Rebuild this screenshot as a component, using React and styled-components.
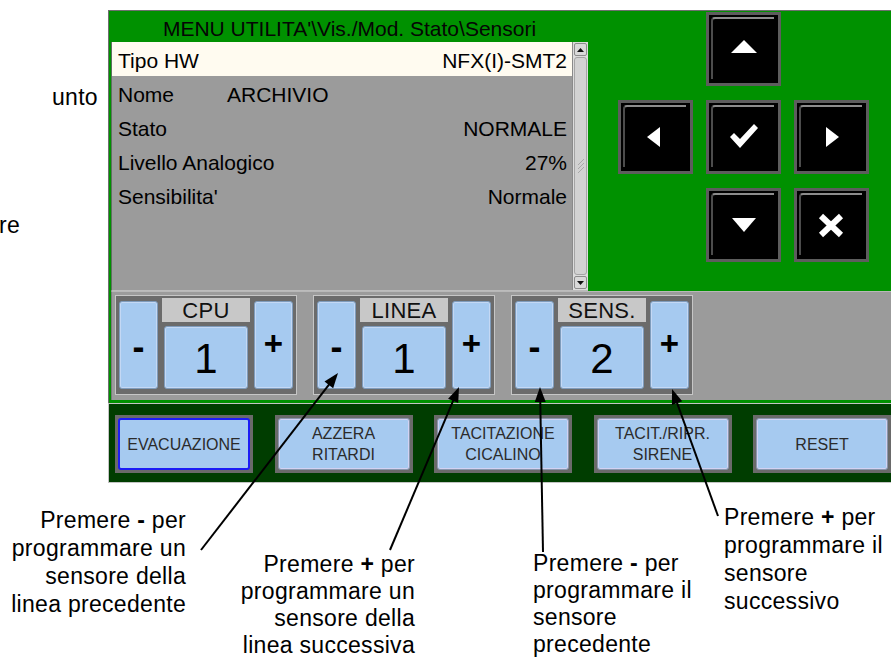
import React from 'react';
import styled, { createGlobalStyle, css } from 'styled-components';

const Global = createGlobalStyle`
  html, body { margin: 0; padding: 0; background: #ffffff; }
  body { font-family: "Liberation Sans", Arial, sans-serif; }
  * { box-sizing: border-box; }
`;

const Page = styled.div`
  position: relative;
  width: 891px;
  height: 659px;
  overflow: hidden;
  background: #ffffff;
  color: #000;
`;

const TopRow = styled.div`
  display: flex;
  height: 483px;
`;

const SideNotes = styled.div`
  width: 108px;
  flex: none;
  padding-top: 83px;
  font-size: 23px;
  line-height: 28px;
  letter-spacing: 0.3px;
  white-space: nowrap;
  overflow: hidden;
`;

const SideLine = styled.div`
  margin-left: ${p => p.$indent}px;
  margin-top: ${p => p.$gap || 0}px;
`;

const Screen = styled.div`
  width: 792px;
  flex: none;
  margin-top: 10px;
  display: flex;
  flex-direction: column;
`;

const UpperPanel = styled.div`
  background: #009100;
  border-top: 1px solid #6e6e6e;
  border-left: 1px solid #6e6e6e;
  padding-bottom: 3px;
  display: flex;
  flex-direction: column;
`;

const MainRow = styled.div`
  display: flex;
  height: 280px;
`;

const LeftCol = styled.div`
  width: 479px;
  flex: none;
  padding-left: 2px;
  display: flex;
  flex-direction: column;
`;

const Header = styled.div`
  height: 31px;
  padding-top: 4px;
  display: flex;
  align-items: center;
  justify-content: center;
  font-size: 21px;
  color: #050505;
  white-space: nowrap;
`;

const ListBox = styled.div`
  height: 249px;
  display: flex;
  border-left: 1px solid #5f6f5f;
  border-bottom: 1px solid #bcbcbc;
`;

const List = styled.div`
  flex: 1;
  background: #9b9b9b;
`;

const Row = styled.div`
  height: 34px;
  padding: 3px 5px 0 6px;
  display: flex;
  align-items: center;
  justify-content: space-between;
  font-size: 21px;
  white-space: nowrap;
  background: ${p => (p.$highlight ? '#fffbf0' : 'transparent')};
`;

const RowLabel = styled.span`
  width: ${p => (p.$fixed ? `${p.$fixed}px` : 'auto')};
  flex: none;
`;

const RowValue = styled.span`
  flex: ${p => (p.$left ? '1' : 'none')};
`;

const Scrollbar = styled.div`
  width: 16px;
  flex: none;
  background: #dcdcdc;
  border-left: 1px solid #8a8a8a;
  display: flex;
  flex-direction: column;
  padding: 1px;
`;

const ScrollBtn = styled.div`
  height: 13px;
  flex: none;
  border: 1px solid #8c8c8c;
  border-radius: 2px;
  background: #d9d9d9;
  display: flex;
  align-items: center;
  justify-content: center;
`;

const Thumb = styled.div`
  flex: 1;
  margin: 1px 0;
  border: 1px solid #a4a4a4;
  border-radius: 3px;
  background: #d2d2d2;
  display: flex;
  align-items: center;
  justify-content: center;
`;

const RightCol = styled.div`
  flex: 1;
  padding: 1px 0 0 30px;
`;

const NavGrid = styled.div`
  display: grid;
  grid-template-columns: repeat(3, 75px);
  grid-template-rows: repeat(3, 74px);
  column-gap: 13px;
  row-gap: 14px;
`;

const NavButton = styled.button`
  grid-column: ${p => p.$col};
  grid-row: ${p => p.$row};
  position: relative;
  border: 3px solid #5d5d5d;
  background: #000;
  padding: 0;
  display: flex;
  align-items: center;
  justify-content: center;
  &::before {
    content: '';
    position: absolute;
    top: 2px;
    left: 2px;
    right: 4px;
    bottom: 4px;
    border-top: 2px solid #8c8c8c;
    border-left: 2px solid #4c4c4c;
    border-radius: 4px 0 0 0;
  }
`;

const CounterBar = styled.div`
  height: 109px;
  margin-left: 2px;
  background: #9b9b9b;
  border-top: 1px solid #b8b8b8;
  border-left: 1px solid #7a7a7a;
  padding: 3px 0 0 3px;
  display: flex;
  gap: 16px;
  align-items: flex-start;
`;

const Group = styled.div`
  width: 182px;
  flex: none;
  display: flex;
  gap: 4px;
  border: 1px solid #c6c6c6;
  background: #6b6b6b;
  padding: 2px 3px 5px;
`;

const blueFace = css`
  background: #a6caf0;
  border: 1px solid #7f9cbc;
  box-shadow: inset 0 0 0 1px #c4d8f4;
  border-radius: 3px;
  display: flex;
  align-items: center;
  justify-content: center;
  color: #000;
`;

const StepButton = styled.div`
  ${blueFace};
  width: 39px;
  height: 88px;
  flex: none;
  margin-top: 3px;
  font-size: ${p => (p.$plus ? '33px' : '36px')};
  font-weight: 700;
  padding-bottom: ${p => (p.$plus ? '2px' : '0')};
  padding-top: ${p => (p.$plus ? '0' : '4px')};
`;

const Middle = styled.div`
  width: 88px;
  flex: none;
  display: flex;
  flex-direction: column;
`;

const GroupLabel = styled.div`
  height: 24px;
  background: #c8c8c8;
  font-size: 22px;
  line-height: 26px;
  text-align: center;
  color: #111;
  letter-spacing: 0.3px;
`;

const ValueBox = styled.div`
  ${blueFace};
  height: 63px;
  margin: 4px 2px 0;
  font-size: 42px;
  padding-top: 2px;
`;

const BottomPanel = styled.div`
  height: 80px;
  background: #003d00;
  border: 1px solid #c4c4c4;
  border-right: none;
  padding: 11px 0 0 6px;
  display: flex;
  gap: 21.5px;
`;

const ActionButton = styled.div`
  width: 138px;
  height: 58px;
  flex: none;
  background: #6a6a6a;
  padding: 3px;
`;

const ActionFace = styled.div`
  height: 100%;
  background: #a6caf0;
  border-radius: 3px;
  display: flex;
  flex-direction: column;
  align-items: center;
  justify-content: center;
  font-size: 16px;
  line-height: 21px;
  color: #2b2b2b;
  text-align: center;
  ${p =>
    p.$active
      ? css`border: 2px solid #1c1cf5;`
      : css`
          border: 1px solid #8896ac;
          box-shadow: inset 0 0 0 1px #d2d2f2;
        `}
`;

const NotesRow = styled.div`
  display: flex;
  height: 176px;
`;

const NoteBlock = styled.div`
  width: ${p => (p.$width ? `${p.$width}px` : 'auto')};
  flex: ${p => (p.$width ? 'none' : '1')};
  margin-top: ${p => p.$mt}px;
  padding-left: ${p => p.$pl || 0}px;
  text-align: ${p => p.$align};
  font-size: 23px;
  line-height: ${p => p.$pitch}px;
  letter-spacing: 0.3px;
  white-space: nowrap;
`;

const NoteLine = styled.div``;

const Overlay = styled.svg`
  position: absolute;
  left: 0;
  top: 0;
  pointer-events: none;
`;

const rows = [
  { label: 'Tipo HW', value: 'NFX(I)-SMT2', highlight: true },
  { label: 'Nome', value: 'ARCHIVIO', left: true },
  { label: 'Stato', value: 'NORMALE' },
  { label: 'Livello Analogico', value: '27%' },
  { label: "Sensibilita'", value: 'Normale' },
];

const groups = [
  { label: 'CPU', value: '1' },
  { label: 'LINEA', value: '1' },
  { label: 'SENS.', value: '2' },
];

const actions = [
  { lines: ['EVACUAZIONE'], active: true },
  { lines: ['AZZERA', 'RITARDI'] },
  { lines: ['TACITAZIONE', 'CICALINO'] },
  { lines: ['TACIT./RIPR.', 'SIRENE'] },
  { lines: ['RESET'] },
];

const notes = [
  { width: 186, mt: 23, pitch: 28, align: 'right', sign: '-', lines: ['programmare un', 'sensore della', 'linea precedente'] },
  { width: 229, mt: 68, pitch: 27, align: 'right', sign: '+', lines: ['programmare un', 'sensore della', 'linea successiva'] },
  { width: 309, mt: 67, pitch: 27, pl: 118, align: 'left', sign: '-', lines: ['programmare il', 'sensore', 'precedente'] },
  { mt: 20, pitch: 28, align: 'left', sign: '+', lines: ['programmare il', 'sensore', 'successivo'] },
];

const arrows = [
  [201, 550, 338, 373],
  [390, 550, 459, 387],
  [543, 552, 540, 387],
  [718, 516, 672, 389],
];

function headPoints(x1, y1, x2, y2) {
  const dx = x2 - x1;
  const dy = y2 - y1;
  const len = Math.hypot(dx, dy);
  const ux = dx / len;
  const uy = dy / len;
  const L = 15;
  const W = 5.5;
  const bx = x2 - ux * L;
  const by = y2 - uy * L;
  return `${x2},${y2} ${bx - uy * W},${by + ux * W} ${bx + uy * W},${by - ux * W}`;
}

const Caret = ({ down }) => (
  <svg width="7" height="4" viewBox="0 0 7 4">
    <polygon points={down ? '0,0 7,0 3.5,4' : '0,4 7,4 3.5,0'} fill="#111" />
  </svg>
);

const Grip = () => (
  <svg width="8" height="14" viewBox="0 0 8 14">
    <g stroke="#a8a8a8" strokeWidth="1">
      <line x1="1" y1="6" x2="7" y2="0" />
      <line x1="1" y1="10" x2="7" y2="4" />
      <line x1="1" y1="14" x2="7" y2="8" />
    </g>
  </svg>
);

export default function App() {
  return (
    <Page>
      <Global />
      <TopRow>
        <SideNotes>
          <SideLine $indent={52}>unto</SideLine>
          <SideLine $indent={-1} $gap={100}>re</SideLine>
        </SideNotes>
        <Screen>
          <UpperPanel>
            <MainRow>
              <LeftCol>
                <Header>MENU UTILITA'\Vis./Mod. Stato\Sensori</Header>
                <ListBox>
                  <List>
                    {rows.map(r => (
                      <Row key={r.label} $highlight={r.highlight}>
                        <RowLabel $fixed={r.left ? 109 : 0}>{r.label}</RowLabel>
                        <RowValue $left={r.left}>{r.value}</RowValue>
                      </Row>
                    ))}
                  </List>
                  <Scrollbar>
                    <ScrollBtn><Caret /></ScrollBtn>
                    <Thumb><Grip /></Thumb>
                    <ScrollBtn><Caret down /></ScrollBtn>
                  </Scrollbar>
                </ListBox>
              </LeftCol>
              <RightCol>
                <NavGrid>
                  <NavButton $col={2} $row={1} aria-label="su">
                    <svg width="26" height="13" viewBox="0 0 26 13" style={{ marginBottom: 5 }}>
                      <polygon points="13,0 26,13 0,13" fill="#fff" />
                    </svg>
                  </NavButton>
                  <NavButton $col={1} $row={2} aria-label="sinistra">
                    <svg width="13" height="20" viewBox="0 0 13 20" style={{ marginRight: 4 }}>
                      <polygon points="0,10 13,0 13,20" fill="#fff" />
                    </svg>
                  </NavButton>
                  <NavButton $col={2} $row={2} aria-label="conferma">
                    <svg width="28" height="24" viewBox="0 0 28 24" style={{ marginBottom: 3 }}>
                      <polygon points="0,13 4,9 10,15 24,0 28,4 10,24" fill="#fff" />
                    </svg>
                  </NavButton>
                  <NavButton $col={3} $row={2} aria-label="destra">
                    <svg width="13" height="20" viewBox="0 0 13 20" style={{ marginLeft: 1 }}>
                      <polygon points="13,10 0,0 0,20" fill="#fff" />
                    </svg>
                  </NavButton>
                  <NavButton $col={2} $row={3} aria-label="giu">
                    <svg width="24" height="14" viewBox="0 0 24 14">
                      <polygon points="0,0 24,0 12,14" fill="#fff" />
                    </svg>
                  </NavButton>
                  <NavButton $col={3} $row={3} aria-label="annulla">
                    <svg width="26" height="25" viewBox="0 0 26 25" style={{ marginRight: 2 }}>
                      <g stroke="#fff" strokeWidth="6">
                        <line x1="3" y1="3" x2="23" y2="22" />
                        <line x1="23" y1="3" x2="3" y2="22" />
                      </g>
                    </svg>
                  </NavButton>
                </NavGrid>
              </RightCol>
            </MainRow>
            <CounterBar>
              {groups.map(g => (
                <Group key={g.label}>
                  <StepButton>-</StepButton>
                  <Middle>
                    <GroupLabel>{g.label}</GroupLabel>
                    <ValueBox>{g.value}</ValueBox>
                  </Middle>
                  <StepButton $plus>+</StepButton>
                </Group>
              ))}
            </CounterBar>
          </UpperPanel>
          <BottomPanel>
            {actions.map(a => (
              <ActionButton key={a.lines.join()}>
                <ActionFace $active={a.active}>
                  {a.lines.map(l => (
                    <span key={l}>{l}</span>
                  ))}
                </ActionFace>
              </ActionButton>
            ))}
          </BottomPanel>
        </Screen>
      </TopRow>
      <NotesRow>
        {notes.map((n, i) => (
          <NoteBlock key={i} $width={n.width} $mt={n.mt} $pl={n.pl} $pitch={n.pitch} $align={n.align}>
            <NoteLine>
              Premere <b>{n.sign}</b> per
            </NoteLine>
            {n.lines.map(l => (
              <NoteLine key={l}>{l}</NoteLine>
            ))}
          </NoteBlock>
        ))}
      </NotesRow>
      <Overlay width="891" height="659" viewBox="0 0 891 659">
        {arrows.map(([x1, y1, x2, y2], i) => {
          const dx = x2 - x1;
          const dy = y2 - y1;
          const len = Math.hypot(dx, dy);
          const ex = x2 - (dx / len) * 10;
          const ey = y2 - (dy / len) * 10;
          return (
            <g key={i}>
              <line x1={x1} y1={y1} x2={ex} y2={ey} stroke="#000" strokeWidth="2" />
              <polygon points={headPoints(x1, y1, x2, y2)} fill="#000" />
            </g>
          );
        })}
      </Overlay>
    </Page>
  );
}
